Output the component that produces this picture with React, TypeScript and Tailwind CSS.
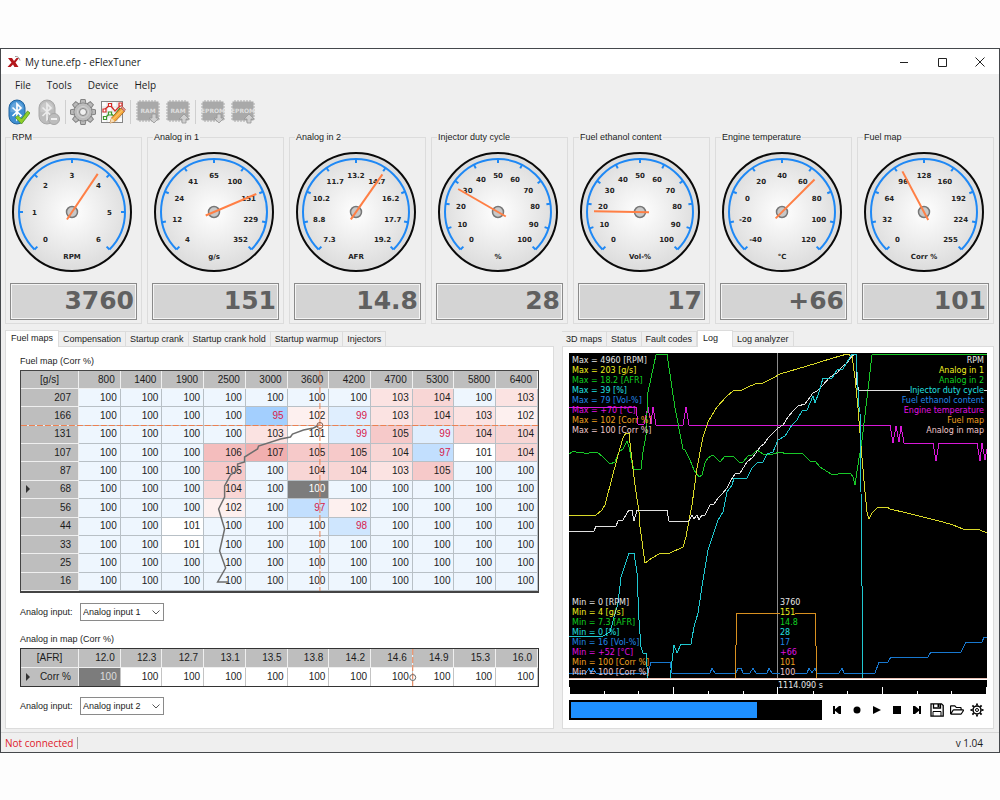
import { useState } from 'react';
import type { ReactNode } from 'react';
import { FaRegFolderOpen } from 'react-icons/fa';

type GaugeProps = {
  title: string;
  unit: string;
  labels: string[];
  angle: number;
  value: string;
};

const gauges: GaugeProps[] = [
  { title: 'RPM', unit: 'RPM', labels: ['0', '1', '2', '3', '4', '5', '6'], angle: 34, value: '3760' },
  { title: 'Analog in 1', unit: 'g/s', labels: ['4', '12', '24', '41', '65', '100', '151', '229', '352'], angle: 67, value: '151' },
  { title: 'Analog in 2', unit: 'AFR', labels: ['7.3', '8.8', '10.2', '11.7', '13.2', '14.7', '16.2', '17.7', '19.2'], angle: 35, value: '14.8' },
  { title: 'Injector duty cycle', unit: '%', labels: ['0', '10', '20', '30', '40', '50', '60', '70', '80', '90', '100'], angle: -60, value: '28' },
  { title: 'Fuel ethanol content', unit: 'Vol-%', labels: ['0', '10', '20', '30', '40', '50', '60', '70', '80', '90', '100'], angle: -89, value: '17' },
  { title: 'Engine temperature', unit: '°C', labels: ['-40', '-20', '0', '20', '40', '60', '80', '100', '120'], angle: 45, value: '+66' },
  { title: 'Fuel map', unit: 'Corr %', labels: ['0', '32', '64', '96', '128', '160', '192', '224', '255'], angle: -28, value: '101' },
];

const rpmAxis = [800, 1400, 1900, 2500, 3000, 3600, 4200, 4700, 5300, 5800, 6400];

const fuelRows = [
  { load: 207, cells: [100, 100, 100, 100, 100, 100, 100, 103, 104, 100, 103] },
  { load: 166, cells: [100, 100, 100, 100, 95, 102, 99, 103, 104, 103, 102] },
  { load: 131, cells: [100, 100, 100, 100, 103, 101, 99, 105, 99, 104, 104] },
  { load: 107, cells: [100, 100, 100, 106, 107, 105, 105, 104, 97, 101, 104] },
  { load: 87, cells: [100, 100, 100, 105, 100, 104, 104, 103, 105, 100, 100] },
  { load: 68, cells: [100, 100, 100, 104, 100, 100, 100, 100, 100, 100, 100] },
  { load: 56, cells: [100, 100, 100, 102, 100, 97, 102, 100, 100, 100, 100] },
  { load: 44, cells: [100, 100, 101, 100, 100, 100, 98, 100, 100, 100, 100] },
  { load: 33, cells: [100, 100, 101, 100, 100, 100, 100, 100, 100, 100, 100] },
  { load: 25, cells: [100, 100, 100, 100, 100, 100, 100, 100, 100, 100, 100] },
  { load: 16, cells: [100, 100, 100, 100, 100, 100, 100, 100, 100, 100, 100] },
];

const cellColors: Record<number, string> = {
  95: 'bg-[#a3cffe] text-[#d8204c]',
  97: 'bg-[#c2dffe] text-[#d8204c]',
  98: 'bg-[#cfe6fe] text-[#d8204c]',
  99: 'bg-[#dfeefe] text-[#d8204c]',
  100: 'bg-[#eef6fe]',
  101: 'bg-white',
  102: 'bg-[#fdf0ef]',
  103: 'bg-[#fbe3e2]',
  104: 'bg-[#f8d6d5]',
  105: 'bg-[#f6c9c9]',
  106: 'bg-[#f4bdbd]',
  107: 'bg-[#f1afaf]',
};

const afrAxis = ['12.0', '12.3', '12.7', '13.1', '13.5', '13.8', '14.2', '14.6', '14.9', '15.3', '16.0'];

const channels = [
  { name: 'RPM', max: '4960 [RPM]', min: '0 [RPM]', now: '3760', color: 'text-[#e8e8e8]' },
  { name: 'Analog in 1', max: '203 [g/s]', min: '4 [g/s]', now: '151', color: 'text-[#f0f020]' },
  { name: 'Analog in 2', max: '18.2 [AFR]', min: '7.3 [AFR]', now: '14.8', color: 'text-[#10d020]' },
  { name: 'Injector duty cycle', max: '39 [%]', min: '0 [%]', now: '28', color: 'text-[#20e0e0]' },
  { name: 'Fuel ethanol content', max: '79 [Vol-%]', min: '16 [Vol-%]', now: '17', color: 'text-[#2088e8]' },
  { name: 'Engine temperature', max: '+70 [°C]', min: '+52 [°C]', now: '+66', color: 'text-[#e010e0]' },
  { name: 'Fuel map', max: '102 [Corr %]', min: '100 [Corr %]', now: '101', color: 'text-[#f0a020]' },
  { name: 'Analog in map', max: '100 [Corr %]', min: '100 [Corr %]', now: '100', color: 'text-[#f0c8cc]' },
];

const traces = [
  {
    color: '#1878d0',
    points:
      '0,320 17,320 20,315 22,320 24,315 27,320 79,320 82,309 101,309 103,320 141,320 143,315 146,320 167,320 169,315 172,315 174,320 181,320 184,315 187,320 198,320 200,315 203,320 238,320 240,315 243,320 246,315 248,320 270,320 273,315 275,320 306,320 310,309 319,309 322,304 359,304 362,299 392,299 397,289 413,289 415,284 418,284',
  },
  {
    color: '#d818d8',
    points:
      '0,54 67,54 69,71 75,71 79,54 82,71 84,54 87,72 114,72 117,54 120,72 321,72 324,90 327,73 330,89 332,73 335,90 364,90 367,108 370,90 408,90 411,108 413,90 416,107 418,96',
  },
  { color: '#d89020', points: '166,325 168,260 246,260 248,325' },
  {
    color: '#18c828',
    points:
      '0,101 5,98 9,100 13,99 17,101 23,99 28,99 34,104 41,111 46,109 50,99 54,96 58,88 60,94 63,110 65,116 72,116 74,99 77,82 79,39 87,2 88,1 98,1 106,55 114,96 116,97 121,107 125,117 130,124 133,122 136,110 139,105 144,102 151,109 156,103 164,103 170,109 174,109 179,103 183,102 188,97 194,101 204,101 211,99 218,101 223,100 233,100 241,108 246,108 251,114 262,121 268,122 270,120 282,121 284,124 286,132 290,105 292,95 294,79 298,45 303,2 304,1 418,1',
  },
  {
    color: '#d8d828',
    points:
      '0,162 27,162 33,157 36,152 43,125 51,95 54,85 57,80 60,80 62,99 66,132 70,159 71,174 76,210 83,205 90,201 101,200 114,194 117,184 120,167 123,152 128,115 134,84 139,69 148,54 158,43 164,38 173,37 179,34 186,31 194,30 204,25 211,21 228,16 248,10 264,5 278,1 283,3 286,25 289,55 293,105 296,139 298,159 300,166 303,160 308,155 313,154 318,154 321,156 338,160 358,165 374,169 384,172 394,176 411,177 418,180',
  },
  {
    color: '#e0e0e0',
    points:
      '0,178 25,178 27,173 47,173 49,168 54,167 60,157 63,157 65,168 68,157 98,157 100,168 120,168 123,162 125,166 128,162 130,167 133,162 136,162 141,152 145,151 149,145 153,141 158,135 162,127 166,121 171,120 178,109 184,104 191,94 195,91 199,85 204,80 209,75 214,72 219,64 224,58 229,53 236,51 244,40 248,38 254,32 261,24 268,20 273,14 278,10 283,3 287,1 288,32 290,37 418,37',
  },
  {
    color: '#20c8d0',
    points:
      '0,283 34,283 41,279 49,250 52,224 60,200 65,200 68,220 70,267 72,294 74,300 77,300 78,314 78,325 101,325 105,292 108,300 112,291 122,291 125,274 129,260 134,227 139,197 149,167 154,159 158,139 163,132 165,125 178,125 183,115 188,110 194,109 198,101 204,99 209,87 216,83 223,72 228,67 233,58 238,57 244,43 246,50 250,39 254,25 263,25 268,17 274,16 283,1 287,1 290,54 291,59 292,139 294,325',
  },
];

const majorTicks = [0, 104, 208, 313, 417];
const minorTicks = [35, 69, 139, 174, 244, 278, 348, 382];

const Gauge = ({ title, unit, labels, angle, value }: GaugeProps) => (
  <fieldset className="min-w-0 border border-[#dcdcdc] px-1 pb-[3px]">
    <legend className="ml-px h-3 px-px leading-3">{title}</legend>
    <svg viewBox="-62 -62 124 124" className="mt-[7px] block h-[124px] w-[124px]">
      <defs>
        <radialGradient id={`dial-${title.replaceAll(' ', '-')}`}>
          <stop offset="0" stopColor="#ffffff" />
          <stop offset="1" stopColor="#dcdcdc" />
        </radialGradient>
      </defs>
      <circle r="59" fill={`url(#dial-${title.replaceAll(' ', '-')})`} stroke="#0a0a0a" strokeWidth="2" />
      <path d="M-37.5 37.5A53 53 0 1 1 37.5 37.5" fill="none" stroke="#1e88f5" strokeWidth="2" />
      {labels.map((label, i) => {
        const deg = -135 + (270 / (labels.length - 1)) * i;
        const rad = (deg * Math.PI) / 180;
        return (
          <g key={label}>
            <line y1="-53" y2="-49" transform={`rotate(${deg})`} stroke="#1e88f5" strokeWidth="2" />
            <text
              x={Math.sin(rad) * 37.5}
              y={-Math.cos(rad) * 37.5 + 3}
              textAnchor="middle"
              className="fill-[#222] font-['DejaVu_Sans'] text-[7px] font-bold"
            >
              {label}
            </text>
          </g>
        );
      })}
      <text y="47" textAnchor="middle" className="fill-[#222] font-['DejaVu_Sans'] text-[7px] font-bold">
        {unit}
      </text>
      <circle r="5.5" fill="#c8c8c8" stroke="#777" strokeWidth="1.5" />
      <line y1="9" y2="-46" transform={`rotate(${angle})`} stroke="#ff7f45" strokeWidth="2" />
    </svg>
    <output className="mt-[9px] block h-[37px] border border-[#8a8a8a] bg-[#d4d4d4] pr-0.5 text-right font-['DejaVu_Sans'] text-[25px] leading-[34px] font-bold text-[#606060] shadow-[inset_1px_1px_0_#f4f4f4,inset_-1px_-1px_0_#f4f4f4]">
      {value}
    </output>
  </fieldset>
);

const BluetoothIcon = ({ active }: { active: boolean }) => (
  <svg viewBox="0 0 24 26" className="h-[26px] w-6">
    <rect x="3" y="1" width="16" height="24" rx="8" fill={active ? '#3f8fd2' : '#bcbcbc'} stroke={active ? '#23639c' : '#a8a8a8'} />
    <path d="M4.500 10a6.500 7 0 0 1 13 0q-6 4-13 3z" fill="#fff" opacity=".2" />
    <path d="M6.500 8.500l8.500 8-4 4V5l4 4-8.500 8" fill="none" stroke={active ? '#fff' : '#ececec'} strokeWidth="1.700" />
    {active ? (
      <path d="M9.500 18.500l2.500-2 3.500 3.500 6-8 2.500 2-8.500 11z" fill="#8fce2c" stroke="#4d951a" strokeWidth=".8" />
    ) : (
      <g>
        <circle cx="18" cy="20" r="5.500" fill="#bdbdbd" stroke="#a5a5a5" />
        <rect x="15" y="19" width="6" height="2" fill="#efefef" />
      </g>
    )}
  </svg>
);

const teeth = [0, 45, 90, 135, 180, 225, 270, 315];

const SettingsIcon = () => (
  <svg viewBox="-13 -13 26 26" className="size-[26px]">
    <g fill="#b9b9b9" stroke="#828282">
      {teeth.map((deg) => (
        <path key={deg} d="M-3-8l.8-4.500h4.400l.8 4.500z" transform={`rotate(${deg})`} />
      ))}
      <circle r="9" />
    </g>
    <circle r="8.500" fill="#bcbcbc" />
    <circle r="5.500" fill="none" stroke="#d2d2d2" />
    <circle r="3.500" fill="#f0f0f0" stroke="#828282" />
  </svg>
);

const ChartIcon = () => (
  <svg viewBox="0 0 26 26" className="size-[26px]">
    <rect x="1.500" y="2.500" width="21" height="21" fill="#fbfbfb" stroke="#858585" />
    <path d="M2 8h20M2 13h20M2 18h20M7 3v20M12 3v20M17 3v20" stroke="#dedede" />
    <path d="M4 11l6-5 5 6 6-6" fill="none" stroke="#d62c28" strokeWidth="1.300" />
    <path d="M5 19l5-5 4 3 6-8" fill="none" stroke="#3d9b2d" strokeWidth="1.300" />
    <g fill="#fff" strokeWidth="1.200">
      <path d="M3 10h3v3H3zM8.500 4.500h3v3h-3zM19 4h3v3h-3z" stroke="#d62c28" />
      <path d="M3.500 17.500h3v3h-3zM8.500 13h3v3h-3z" stroke="#3d9b2d" />
    </g>
    <path d="M10 24l1.500-5L21 9l3.500 3.500L15 22.500z" fill="#f6aa3c" stroke="#a55e18" strokeWidth=".8" />
    <path d="M21 9l1.500-1.500 3 3-1.500 2z" fill="#e58b80" stroke="#9b544c" strokeWidth=".6" />
    <path d="M10 24l1.500-5 3.500 3.500z" fill="#f6ddb8" />
    <path d="M13 20.500l9.500-9.500" stroke="#fbd384" />
  </svg>
);

const ChipIcon = ({ label, up }: { label: string; up?: boolean }) => (
  <svg viewBox="0 0 26 26" className="size-[26px]">
    <path d="M5 1v22M8 1v22M11 1v22M14 1v22M17 1v22M20 1v22M1 5h24M1 8h24M1 11h24M1 14h24M1 17h24M1 20h24" stroke="#a8a8a8" />
    <rect x="2.500" y="2.500" width="21" height="19" fill="#a9a9a9" />
    <text x="13" y="14" textAnchor="middle" className="fill-[#dedede] font-['DejaVu_Sans'] text-[6px] font-bold">
      {label}
    </text>
    <path
      d={up ? 'M19 15l5 5h-3v4h-4v-4h-3z' : 'M17 15h4v4h3l-5 5-5-5h3z'}
      fill="#cfcfcf"
      stroke="#989898"
      strokeWidth=".8"
    />
  </svg>
);

const ToolButton = ({ label, children, disabled }: { label: string; children: ReactNode; disabled?: boolean }) => (
  <button type="button" aria-label={label} title={label} disabled={disabled} className="flex w-[30px] justify-center">
    {children}
  </button>
);

const Separator = () => <div className="mx-0.5 h-6 w-px bg-[#cfcfcf]" />;

const Tabs = ({ names, selected, onSelect }: { names: string[]; selected: string; onSelect: (name: string) => void }) => (
  <div role="tablist" className="relative -mb-px flex h-[17px] items-end">
    {names.map((name) =>
      name === selected ? (
        <button
          key={name}
          type="button"
          role="tab"
          aria-selected
          className="h-[17px] min-w-9 border border-b-0 border-[#dcdcdc] bg-white px-[5px] pb-0.5 text-left whitespace-nowrap"
        >
          {name}
        </button>
      ) : (
        <button
          key={name}
          type="button"
          role="tab"
          aria-selected={false}
          onClick={() => onSelect(name)}
          className="mb-px h-[15px] border border-b-0 border-l-0 border-[#dcdcdc] px-1 leading-[14px] whitespace-nowrap"
        >
          {name}
        </button>
      )
    )}
  </div>
);

const AnalogSelect = ({ id, initial }: { id: string; initial: string }) => (
  <div className="mt-[10px] flex h-[18px] items-center">
    <label htmlFor={id} className="w-[60px] whitespace-nowrap">
      Analog input:
    </label>
    <div className="relative">
      <select id={id} defaultValue={initial} className="block h-[18px] w-[84px] appearance-none border border-[#8a8a8a] bg-white pl-0.5">
        <option>Analog input 1</option>
        <option>Analog input 2</option>
      </select>
      <svg viewBox="0 0 8 5" className="pointer-events-none absolute top-[7px] right-1 h-[5px] w-2">
        <path d="M.5.5L4 4 7.500.5" fill="none" stroke="#555" />
      </svg>
    </div>
  </div>
);

const RowMarker = () => (
  <svg viewBox="0 0 4 8" className="h-2 w-1">
    <path d="M0 0l4 4-4 4z" fill="#333" />
  </svg>
);

const headCell = 'border-r border-b border-[#efefef] bg-[#bebebe] p-0 font-normal';

const FuelMapTable = () => (
  <div className="relative border border-b-2 border-[#444]">
    <table className="h-[220px] w-full table-fixed border-separate border-spacing-0 text-right text-[10px]">
      <thead>
        <tr className="h-[18px]">
          <th className={`${headCell} w-[58px] text-center`}>[g/s]</th>
          {rpmAxis.map((rpm) => (
            <th key={rpm} className={`${headCell} pr-[5px] text-right`}>
              {rpm}
            </th>
          ))}
        </tr>
      </thead>
      <tbody>
        {fuelRows.map((row) => (
          <tr key={row.load}>
            <th className={`${headCell} pr-[7px] pl-[5px]`}>
              <div className="flex items-center justify-between">
                <span>{row.load === 68 && <RowMarker />}</span>
                {row.load}
              </div>
            </th>
            {row.cells.map((cell, i) => (
              <td
                key={i}
                className={`border-r border-b border-[#b8c0c6] p-0 pr-[3px] ${
                  row.load === 68 && i === 5 ? 'bg-[#7c7c7c] text-white' : cellColors[cell]
                }`}
              >
                {cell}
              </td>
            ))}
          </tr>
        ))}
      </tbody>
    </table>
    {/* live position and its recent trail */}
    <svg viewBox="0 0 518 220" preserveAspectRatio="none" className="pointer-events-none absolute inset-0 h-full w-full">
      <polyline
        points="208,211 197,211 205,197 199,180 204,158 198,138 204,126 204,115 210,104 217,99 217,93 224,91 224,86 237,78 238,75 260,68 270,66 272,63 283,59 293,57 299,54"
        fill="none"
        stroke="#6e6e6e"
        strokeWidth="1.500"
      />
      <path d="M0 54.500h518M299.500 0v220" stroke="#ec7f50" strokeDasharray="6 2" />
      <circle cx="299.500" cy="54.500" r="3" fill="none" stroke="#8a5a48" />
    </svg>
  </div>
);

const AnalogMapTable = () => (
  <div className="relative border border-[#333]">
    <table className="w-full table-fixed border-separate border-spacing-0 text-right text-[10px]">
      <thead>
        <tr className="h-[19px]">
          <th className={`${headCell} w-[58px] text-center`}>[AFR]</th>
          {afrAxis.map((afr) => (
            <th key={afr} className={`${headCell} pr-[5px] text-right`}>
              {afr}
            </th>
          ))}
        </tr>
      </thead>
      <tbody>
        <tr className="h-[18px]">
          <th className="border-r border-[#efefef] bg-[#bebebe] p-0 pr-[7px] pl-[5px] font-normal">
            <div className="flex items-center justify-between">
              <RowMarker />
              Corr %
            </div>
          </th>
          {afrAxis.map((afr, i) => (
            <td key={afr} className={`border-r border-[#c4c4c4] p-0 pr-[3px] ${i === 0 ? 'bg-[#7c7c7c] text-[#ddd]' : 'bg-white'}`}>
              100
            </td>
          ))}
        </tr>
      </tbody>
    </table>
    <svg viewBox="0 0 518 37" preserveAspectRatio="none" className="pointer-events-none absolute inset-0 h-full w-full">
      <path d="M392.500 0v37" stroke="#ec7f50" strokeDasharray="6 2" />
      <circle cx="392.500" cy="28.500" r="3" fill="none" stroke="#666" />
    </svg>
  </div>
);

const LogChart = () => (
  <div className="relative h-[341px] bg-black font-['DejaVu_Sans'] text-[8px] leading-[10px]">
    <svg viewBox="0 0 418 341" preserveAspectRatio="none" className="absolute inset-0 h-full w-full" shapeRendering="crispEdges">
      <path d="M208.500 0v325" stroke="#8c8c8c" />
      {traces.map((trace) => (
        <polyline key={trace.color} points={trace.points} fill="none" stroke={trace.color} />
      ))}
      <path d="M0 325.500h418" stroke="#e8c0b4" />
      <path d="M0 326.500h418" stroke="#fff" />
      {majorTicks.map((x) => (
        <path key={x} d={`M${x + 0.5} 334v7`} stroke="#fff" />
      ))}
      {minorTicks.map((x) => (
        <path key={x} d={`M${x + 0.5} 338v3`} stroke="#fff" />
      ))}
    </svg>
    <ul className="absolute top-[3px] left-[3px]">
      {channels.map((c) => (
        <li key={c.name} className={c.color}>
          Max = {c.max}
        </li>
      ))}
    </ul>
    <ul className="absolute top-[3px] right-[3px] text-right">
      {channels.map((c) => (
        <li key={c.name} className={c.color}>
          <span className="bg-black">{c.name}</span>
        </li>
      ))}
    </ul>
    <ul className="absolute top-[245px] left-[3px]">
      {channels.map((c) => (
        <li key={c.name} className={c.color}>
          Min = {c.min}
        </li>
      ))}
    </ul>
    <ul className="absolute top-[245px] left-1/2 ml-[2px]">
      {channels.map((c) => (
        <li key={c.name} className={c.color}>
          <span className="bg-black">{c.now}</span>
        </li>
      ))}
    </ul>
    <span className="absolute top-[328px] left-1/2 bg-black text-[#e8e8e8]">1114.090 s</span>
  </div>
);

const PlayerButton = ({ label, children }: { label: string; children: ReactNode }) => (
  <button type="button" aria-label={label} className="flex h-5 w-5 items-center justify-center text-black">
    {children}
  </button>
);

const Player = () => (
  <div className="mt-1.5 flex h-5 items-center">
    <input
      type="range"
      aria-label="Log position"
      min={0}
      max={100}
      defaultValue={0}
      className="h-5 min-w-0 flex-1 appearance-none bg-black px-0.5 [&::-webkit-slider-thumb]:h-4 [&::-webkit-slider-thumb]:w-[186px] [&::-webkit-slider-thumb]:appearance-none [&::-webkit-slider-thumb]:bg-[#1e90ff]"
    />
    <div className="ml-[5px] flex">
      <PlayerButton label="First">
        <svg viewBox="0 0 8 8" className="size-2 fill-current">
          <path d="M0 0h2v3.200L6 0h2v8H6L2 4.800V8H0z" />
        </svg>
      </PlayerButton>
      <PlayerButton label="Record">
        <svg viewBox="0 0 8 8" className="size-2 fill-current">
          <circle cx="4" cy="4" r="3.500" />
        </svg>
      </PlayerButton>
      <PlayerButton label="Play">
        <svg viewBox="0 0 8 8" className="size-2 fill-current">
          <path d="M0 0l8 4-8 4z" />
        </svg>
      </PlayerButton>
      <PlayerButton label="Stop">
        <svg viewBox="0 0 8 8" className="size-2 fill-current">
          <path d="M0 0h8v8H0z" />
        </svg>
      </PlayerButton>
      <PlayerButton label="Last">
        <svg viewBox="0 0 8 8" className="size-2 fill-current">
          <path d="M0 0h2l4 3.200V0h2v8H6V4.800L2 8H0z" />
        </svg>
      </PlayerButton>
      <PlayerButton label="Save">
        <svg viewBox="0 0 14 14" className="size-3.5" fill="none" stroke="currentColor">
          <path d="M1 .8h10.500L13.200 2.500v10.700H1z" strokeWidth="1.300" />
          <path d="M3.500 1v4h7V1" strokeWidth="1.300" />
          <path d="M7.500 1h2v3h-2z" fill="currentColor" stroke="none" />
          <path d="M3 13V8.500h8V13" />
        </svg>
      </PlayerButton>
      <PlayerButton label="Open">
        <FaRegFolderOpen size={14} />
      </PlayerButton>
      <PlayerButton label="Log settings">
        <svg viewBox="-7 -7 14 14" className="size-3.5" fill="none" stroke="currentColor">
          <circle r="4" strokeWidth="1.500" />
          <circle r="1.500" />
          {teeth.map((deg) => (
            <path key={deg} d="M0-4.500v-2" strokeWidth="1.800" transform={`rotate(${deg})`} />
          ))}
        </svg>
      </PlayerButton>
    </div>
  </div>
);

const TitleBar = () => (
  <header className="flex h-[25px] items-center bg-white pl-1.5 font-['Open_Sans'] text-[10px]">
    <svg viewBox="0 0 14 14" className="mr-1 size-3.5">
      <path d="M1 3h4l2 3 2.500-3H12L8.500 7.500 11.500 12h-4L6 9.500 3.500 12H.5l4-4.500z" fill="#b3161b" />
      <path d="M8 1.500q4-.5 5 4" fill="none" stroke="#999" />
    </svg>
    <h1>My tune.efp - eFlexTuner</h1>
    <div className="ml-auto flex">
      <button type="button" aria-label="Minimize" className="flex w-[38px] items-center justify-center">
        <svg viewBox="0 0 10 10" className="size-2.5" stroke="#222">
          <path d="M1 5.500h8" />
        </svg>
      </button>
      <button type="button" aria-label="Maximize" className="flex w-[38px] items-center justify-center">
        <svg viewBox="0 0 10 10" className="size-2.5" fill="none" stroke="#222">
          <path d="M1.500 1.500h8v8h-8z" />
        </svg>
      </button>
      <button type="button" aria-label="Close" className="flex w-[38px] items-center justify-center">
        <svg viewBox="0 0 10 10" className="size-2.5" stroke="#222">
          <path d="M.5.5l9 9M9.500.5l-9 9" />
        </svg>
      </button>
    </div>
  </header>
);

export default function App() {
  const [mapTab, setMapTab] = useState('Fuel maps');
  const [logTab, setLogTab] = useState('Log');

  return (
    <div className="min-h-screen bg-[#fdfdfd] py-12 font-['Liberation_Sans',sans-serif] text-[9px] leading-3 text-[#1c1c1c]">
      <div className="border border-[#45484c] bg-[#efefef]">
        <TitleBar />
        <nav className="flex h-[22px] items-center gap-4 pl-3.5 font-['Open_Sans'] text-[10px]">
          <button type="button">File</button>
          <button type="button">Tools</button>
          <button type="button">Device</button>
          <button type="button">Help</button>
        </nav>
        <div className="flex h-[31px] items-center pl-0.5">
          <ToolButton label="Connect">
            <BluetoothIcon active />
          </ToolButton>
          <ToolButton label="Disconnect" disabled>
            <BluetoothIcon active={false} />
          </ToolButton>
          <Separator />
          <ToolButton label="Settings">
            <SettingsIcon />
          </ToolButton>
          <ToolButton label="Edit chart">
            <ChartIcon />
          </ToolButton>
          <Separator />
          <ToolButton label="Read RAM" disabled>
            <ChipIcon label="RAM" />
          </ToolButton>
          <ToolButton label="Write RAM" disabled>
            <ChipIcon label="RAM" up />
          </ToolButton>
          <Separator />
          <ToolButton label="Read EPROM" disabled>
            <ChipIcon label="EPROM" />
          </ToolButton>
          <ToolButton label="Write EPROM" disabled>
            <ChipIcon label="EPROM" up />
          </ToolButton>
        </div>

        <section className="mt-1 grid grid-cols-7 gap-[5px] pr-[5px] pl-1">
          {gauges.map((gauge) => (
            <Gauge key={gauge.title} {...gauge} />
          ))}
        </section>

        <main className="mt-1.5 grid grid-cols-[549fr_432fr] gap-2 pr-[5px] pl-1">
          <section className="flex min-w-0 flex-col">
            <Tabs
              names={['Fuel maps', 'Compensation', 'Startup crank', 'Startup crank hold', 'Startup warmup', 'Injectors']}
              selected={mapTab}
              onSelect={setMapTab}
            />
            <div className="flex-1 border border-[#dcdcdc] bg-white px-3.5 pt-2 pb-[13px]">
              <h2 className="mb-[3px]">Fuel map (Corr %)</h2>
              <FuelMapTable />
              <AnalogSelect id="fuel-input" initial="Analog input 1" />
              <h2 className="mt-3 mb-[3px]">Analog in map (Corr %)</h2>
              <AnalogMapTable />
              <AnalogSelect id="analog-input" initial="Analog input 2" />
            </div>
          </section>
          <section className="flex min-w-0 flex-col">
            <Tabs names={['3D maps', 'Status', 'Fault codes', 'Log', 'Log analyzer']} selected={logTab} onSelect={setLogTab} />
            <div className="flex-1 border border-[#dcdcdc] bg-white px-1.5 pt-1.5">
              <LogChart />
              <Player />
            </div>
          </section>
        </main>

        <footer className="mt-[3px] flex h-5 items-center justify-between border-t border-[#d6d6d6] pr-4 pl-1 font-['Open_Sans'] text-[10px]">
          <span className="border-r border-[#a0a0a0] pr-1 text-[#e0202c]">Not connected</span>
          <span>v 1.04</span>
        </footer>
      </div>
    </div>
  );
}
